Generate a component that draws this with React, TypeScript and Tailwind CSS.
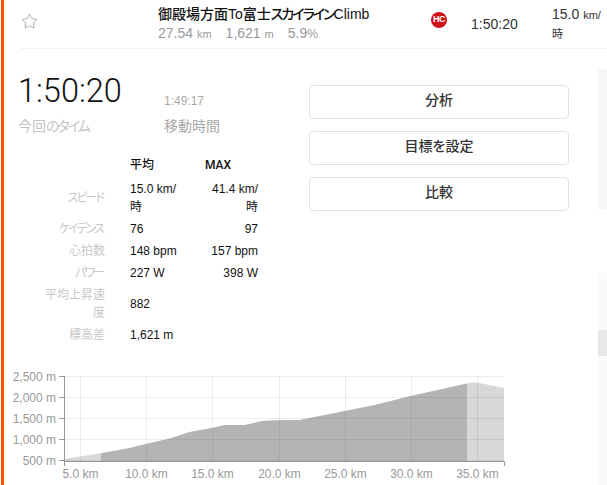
import { Star } from "lucide-react";

const font = "font-['Liberation_Sans','Noto_Sans_CJK_JP',sans-serif] [font-feature-settings:'palt']";

const rows = [
  { label: "スピード", kana: true, avg: "15.0 km/時", max: "41.4 km/時" },
  { label: "ケイデンス", kana: true, avg: "76", max: "97" },
  { label: "心拍数", kana: false, avg: "148 bpm", max: "157 bpm" },
  { label: "パワー", kana: true, avg: "227 W", max: "398 W" },
  { label: "平均上昇速度", kana: false, avg: "882", max: "" },
  { label: "標高差", kana: false, avg: "1,621 m", max: "" },
];

const yTicks = [
  { label: "2,500 m", y: 376.5 },
  { label: "2,000 m", y: 397.5 },
  { label: "1,500 m", y: 418.5 },
  { label: "1,000 m", y: 439.5 },
  { label: "500 m", y: 460.5 },
];

const xTicks = [
  { label: "5.0 km", x: 80.5 },
  { label: "10.0 km", x: 146.5 },
  { label: "15.0 km", x: 212.5 },
  { label: "20.0 km", x: 279.5 },
  { label: "25.0 km", x: 345.5 },
  { label: "30.0 km", x: 411.5 },
  { label: "35.0 km", x: 477.5 },
];

const profile =
  "64,459 101,453.3 130,448 146,444 170,438.5 190,432 212,428 225,425 245,425 262,421 272,420.5 300,420 345,411 375,405 411,396 467,383.5 472,382.5 477,382.5 504,388";

function ElevationChart() {
  return (
    <svg width="520" height="125" viewBox="0 360 520 125" className="block">
      <defs>
        <clipPath id="selected">
          <rect x="101" y="360" width="366" height="101" />
        </clipPath>
      </defs>
      <polygon points={`${profile} 504,461 64,461`} fill="#d8d8d8" />
      <polygon points={`${profile} 504,461 64,461`} fill="#b4b4b4" clipPath="url(#selected)" />
      {yTicks.map((t) => (
        <g key={t.label}>
          <line x1="59" x2="504" y1={t.y} y2={t.y} stroke="#000" strokeOpacity="0.07" />
          <line x1="59" x2="64" y1={t.y} y2={t.y} stroke="#999" />
          <text x="56" y={t.y + 4} textAnchor="end" fontSize="12" fill="#999">
            {t.label}
          </text>
        </g>
      ))}
      {xTicks.map((t) => (
        <g key={t.label}>
          <line x1={t.x} x2={t.x} y1="376" y2="461" stroke="#000" strokeOpacity="0.07" />
          <text x={t.x} y="478" textAnchor="middle" fontSize="12" fill="#999">
            {t.label}
          </text>
        </g>
      ))}
      <line x1="64.5" x2="64.5" y1="376" y2="466" stroke="#999" />
      <line x1="64" x2="504" y1="461.5" y2="461.5" stroke="#999" />
      <line x1="504.5" x2="504.5" y1="461" y2="466" stroke="#999" />
    </svg>
  );
}

export default function App() {
  return (
    <div className={`${font} relative h-[485px] w-[607px] overflow-hidden bg-white text-[#111]`}>
      <div className="flex h-full">
        <div className="ml-px w-[3px] shrink-0 bg-[#fc5200]" />

        <div className="flex min-w-0 flex-1 flex-col">
          {/* Segment header */}
          <div className="ml-[17px] flex h-[49px] shrink-0 items-center border-b border-[#f0f0f5]">
            <Star size={17} strokeWidth={1} className="mb-[6px] shrink-0 text-[#888]" />
            <div className="ml-[120px] w-[270px] shrink-0">
              <div className="text-[14px] leading-[18px] font-medium whitespace-nowrap text-[#111]">
                御殿場方面To富士<span className="tracking-[-2px]">スカイライン</span>Climb
              </div>
              <div className="mt-px flex gap-[14px] text-[14px] leading-[18px] text-[#999]">
                <span>
                  27.54 <span className="text-[11px]">km</span>
                </span>
                <span>
                  1,621 <span className="text-[11px]">m</span>
                </span>
                <span>
                  5.9<span className="text-[12px]">%</span>
                </span>
              </div>
            </div>
            <div className="mb-[9px] ml-[3px] flex h-4 w-4 shrink-0 items-center justify-center rounded-full bg-[#d0101a] text-[9px] font-bold tracking-[-0.5px] text-white">
              HC
            </div>
            <div className="ml-[24px] w-[81px] shrink-0 text-[14px] text-[#333]">1:50:20</div>
            <div className="w-[55px] shrink-0 text-[14px] leading-[18px] text-[#333] [overflow-wrap:anywhere]">
              15.0 <span className="text-[11px]">km/時</span>
            </div>
          </div>

          <div className="flex shrink-0">
            {/* Times and stats */}
            <div className="w-[305px] shrink-0 pl-[14px]">
              <div className="mt-[24px] flex">
                <div className="w-[146px]">
                  <div className="font-['Roboto',sans-serif] text-[32.5px] leading-[36px] font-light text-[#111]">
                    1:50:20
                  </div>
                  <div className="mt-[8px] text-[14px] leading-[18px] text-[#c4c4c4]">
                    今回<span className="tracking-[-2px]">のタイム</span>
                  </div>
                </div>
                <div className="pt-[19px]">
                  <div className="text-[12px] leading-[18px] text-[#a8a8a8]">1:49:17</div>
                  <div className="mt-[7px] text-[14px] leading-[18px] text-[#a8a8a8]">移動時間</div>
                </div>
              </div>

              <table className="mt-[18px] ml-[19px] w-[221px] table-fixed text-[12px] leading-[18px]">
                <thead>
                  <tr>
                    <th className="w-[68px]" />
                    <th className="w-[77px] pt-[3px] pb-[4px] pl-[25px] text-left font-medium">平均</th>
                    <th className="w-[76px] pt-[3px] pb-[4px] pl-[23px] text-left font-['Roboto',sans-serif] font-medium">
                      MAX
                    </th>
                  </tr>
                </thead>
                <tbody>
                  {rows.map((r) => (
                    <tr key={r.label}>
                      <td className="py-[2px] text-right text-[#c8c8c8]">
                        {r.kana ? <span className="pr-[2px] tracking-[-2px]">{r.label}</span> : r.label}
                      </td>
                      <td className="py-[2px] pl-[25px] text-left">{r.avg}</td>
                      <td className="py-[2px] pl-[24px] text-right">{r.max}</td>
                    </tr>
                  ))}
                </tbody>
              </table>
            </div>

            {/* Actions */}
            <div className="mt-[36px] flex w-[260px] shrink-0 flex-col gap-3">
              {["分析", "目標を設定", "比較"].map((label) => (
                <button
                  key={label}
                  className="h-[34px] rounded border border-[#dfdfe8] bg-white pb-[4px] text-[14px] font-medium text-[#333]"
                >
                  {label}
                </button>
              ))}
            </div>
          </div>

          <div className="absolute top-[360px] left-0">
            <ElevationChart />
          </div>
        </div>
      </div>

      {/* Neighbouring page scrollbar tracks */}
      <div className="absolute top-[69px] right-0 h-[140px] w-[9px] bg-[#f7f7fa]" />
      <div className="absolute top-[273px] right-0 h-[212px] w-[9px] bg-[#fafafa]">
        <div className="mt-[57px] h-[26px] bg-[#e8e8e8]" />
      </div>
    </div>
  );
}
